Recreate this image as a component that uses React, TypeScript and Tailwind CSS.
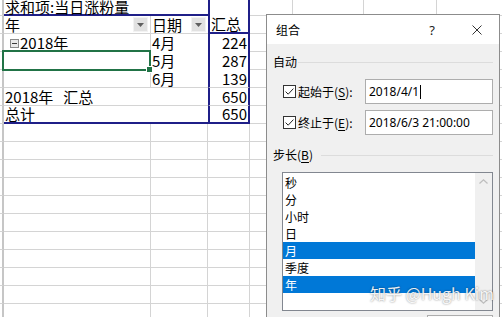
import React from "react";

function Tri() {
  return (
    <svg width="7" height="4" viewBox="0 0 7 4">
      <path d="M0 0H7L3.5 4Z" fill="#5f5f5f" />
    </svg>
  );
}

function DropBtn() {
  return (
    <div className="shrink-0 w-[15px] h-[15px] bg-[#e1e1e1] border border-[#f2f2f2] flex items-center justify-center">
      <Tri />
    </div>
  );
}

function Collapse() {
  return (
    <div className="shrink-0 w-[9px] h-[9px] bg-[#e9e9e9] border border-[#8a8a8a] flex items-center justify-center">
      <div className="w-[5px] h-px bg-[#3a3a3a]" />
    </div>
  );
}

function RH() {
  return <div className="shrink-0 w-[4px] h-full border-r-2 border-r-[#c6c6c6] border-b border-b-[#d4d4d4]" />;
}

function Tail() {
  return (
    <>
      <div className="shrink-0 w-[43px] h-full border-r border-b border-[#d4d4d4]" />
      <div className="shrink-0 w-[71px] h-full border-r border-b border-[#d4d4d4]" />
      <div className="shrink-0 w-[73px] h-full border-r border-b border-[#d4d4d4]" />
      <div className="shrink-0 w-[73px] h-full border-r border-b border-[#d4d4d4]" />
    </>
  );
}

function EmptyRow() {
  return (
    <div className="flex h-[18px]">
      <RH />
      <div className="shrink-0 w-[147px] h-full border-r border-b border-[#d4d4d4]" />
      <div className="shrink-0 w-[57px] h-full border-r border-b border-[#d4d4d4]" />
      <div className="shrink-0 w-[42px] h-full border-r border-b border-[#d4d4d4]" />
      <Tail />
    </div>
  );
}

function Check() {
  return (
    <svg width="13" height="13" viewBox="0 0 13 13" className="shrink-0">
      <rect x="0.5" y="0.5" width="12" height="12" fill="#ffffff" stroke="#333333" />
      <path d="M2.6 6.6 L5.2 9.2 L10.4 3.6" fill="none" stroke="#222222" strokeWidth="1" />
    </svg>
  );
}

function Sheet() {
  const blue = "border-[#1f1f88]";
  return (
    <div className="flex flex-col font-['Noto_Sans_CJK_SC',sans-serif] text-[15px] text-black">
      {/* row 1 */}
      <div className="flex h-[16px]">
        <RH />
        <div className="shrink-0 w-[147px] h-full border-b-2 border-b-[#1f1f88] pl-[1px] leading-[14px] whitespace-nowrap overflow-visible">
          求和项:当日涨粉量
        </div>
        <div className="shrink-0 w-[57px] h-full border-b-2 border-b-[#1f1f88]" />
        <div className={`shrink-0 w-[42px] h-full border-l-2 border-r-2 ${blue}`} />
        <Tail />
      </div>
      {/* row 2 header */}
      <div className="flex h-[18px]">
        <RH />
        <div className="shrink-0 w-[147px] h-full border-r border-b border-[#d4d4d4] pl-[1px] pr-[2px] flex items-center justify-between leading-[17px]">
          <span>年</span>
          <DropBtn />
        </div>
        <div className="shrink-0 w-[57px] h-full border-b border-[#d4d4d4] pl-[1px] pr-[2px] flex items-center justify-between leading-[17px]">
          <span>日期</span>
          <DropBtn />
        </div>
        <div className={`shrink-0 w-[42px] h-full border-l-2 border-r-2 border-b-2 ${blue} pl-[1px] leading-[16px]`}>
          汇总
        </div>
        <Tail />
      </div>
      {/* row 3 */}
      <div className="flex h-[18px]">
        <RH />
        <div className="shrink-0 w-[147px] h-full border-r border-[#d4d4d4] pl-[6px] flex items-center gap-[1px] leading-[18px]">
          <Collapse />
          <span>2018年</span>
        </div>
        <div className="shrink-0 w-[57px] h-full pl-[1px] leading-[18px]">4月</div>
        <div className={`shrink-0 w-[42px] h-full border-l-2 border-r-2 ${blue} pr-[1px] text-right leading-[18px]`}>224</div>
        <Tail />
      </div>
      {/* row 4 */}
      <div className="flex h-[18px]">
        <RH />
        <div className="relative shrink-0 w-[147px] h-full border-r border-[#d4d4d4]">
          <div className="absolute -left-[2px] -top-[2px] -right-[1px] -bottom-[1px] border-2 border-[#217346]">
            <div className="absolute -right-[4px] -bottom-[4px] w-[7px] h-[7px] bg-[#217346] border border-white" />
          </div>
        </div>
        <div className="shrink-0 w-[57px] h-full pl-[1px] leading-[18px]">5月</div>
        <div className={`shrink-0 w-[42px] h-full border-l-2 border-r-2 ${blue} pr-[1px] text-right leading-[18px]`}>287</div>
        <Tail />
      </div>
      {/* row 5 */}
      <div className="flex h-[18px]">
        <RH />
        <div className="shrink-0 w-[147px] h-full border-r border-b border-[#d4d4d4]" />
        <div className="shrink-0 w-[57px] h-full border-b border-[#d4d4d4] pl-[1px] leading-[17px]">6月</div>
        <div className="shrink-0 w-[42px] h-full border-l-2 border-r-2 border-l-[#1f1f88] border-r-[#1f1f88] border-b border-b-[#d4d4d4] pr-[1px] text-right leading-[17px]">139</div>
        <Tail />
      </div>
      {/* row 6 */}
      <div className="flex h-[18px]">
        <RH />
        <div className="shrink-0 w-[147px] h-full border-b border-[#d4d4d4] pl-[1px] leading-[17px] whitespace-nowrap">
          2018年<span className="ml-[10px]">汇总</span>
        </div>
        <div className="shrink-0 w-[57px] h-full border-b border-[#d4d4d4]" />
        <div className="shrink-0 w-[42px] h-full border-l-2 border-r-2 border-l-[#1f1f88] border-r-[#1f1f88] border-b border-b-[#d4d4d4] pr-[1px] text-right leading-[17px]">650</div>
        <Tail />
      </div>
      {/* row 7 */}
      <div className="flex h-[18px]">
        <RH />
        <div className="shrink-0 w-[147px] h-full border-b-2 border-b-[#1f1f88] pl-[1px] leading-[16px]">总计</div>
        <div className="shrink-0 w-[57px] h-full border-b-2 border-b-[#1f1f88]" />
        <div className={`shrink-0 w-[42px] h-full border-l-2 border-r-2 border-b-2 ${blue} pr-[1px] text-right leading-[16px]`}>650</div>
        <Tail />
      </div>
      {Array.from({ length: 11 }).map((_, i) => (
        <EmptyRow key={i} />
      ))}
    </div>
  );
}

function Dialog() {
  const items = ["秒", "分", "小时", "日", "月", "季度", "年"];
  const selected = new Set(["月", "年"]);
  return (
    <div className="absolute left-[266px] top-[14px] w-[234px] h-[330px] border border-[#8c8c8c] bg-[#f0f0f0] font-['Noto_Sans','Noto_Sans_CJK_SC',sans-serif] text-[12px] text-black flex flex-col">
      {/* title bar */}
      <div className="h-[29px] bg-white flex items-center pl-[9px] shrink-0">
        <span className="font-['Noto_Sans_CJK_SC',sans-serif] leading-[16px]">组合</span>
        <span className="ml-auto text-[13px] text-[#222] leading-[16px]">?</span>
        <svg width="10" height="10" viewBox="0 0 10 10" className="ml-[37px] mr-[17px]">
          <path d="M0.5 0.5 L9.5 9.5 M9.5 0.5 L0.5 9.5" stroke="#333333" strokeWidth="1" />
        </svg>
      </div>
      {/* body */}
      <div className="flex flex-col pt-[10px] font-['Noto_Sans_CJK_SC',sans-serif]">
        <div className="flex items-center h-[16px] pl-[6px] pr-[6px]">
          <span className="leading-[16px]">自动</span>
          <div className="flex-1 h-px bg-[#dcdcdc] ml-[1px]" />
        </div>
        <div className="flex items-center h-[25px] mt-[9px] pl-[16px] pr-[6px]">
          <Check />
          <span className="ml-[2px] leading-[16px]">
            起始于(<span className="underline underline-offset-2">S</span>):
          </span>
          <div className="ml-auto w-[128px] h-full bg-white border border-[#adadad] flex items-center pl-[3px] font-['Noto_Sans',sans-serif]">
            <span className="leading-[16px]">2018/4/1</span>
            <div className="w-px h-[14px] bg-black ml-[1px]" />
          </div>
        </div>
        <div className="flex items-center h-[25px] mt-[6px] pl-[16px] pr-[6px]">
          <Check />
          <span className="ml-[2px] leading-[16px]">
            终止于(<span className="underline underline-offset-2">E</span>):
          </span>
          <div className="ml-auto w-[128px] h-full bg-white border border-[#adadad] flex items-center pl-[3px] font-['Noto_Sans',sans-serif]">
            <span className="leading-[16px]">2018/6/3 21:00:00</span>
          </div>
        </div>
        <div className="flex items-center h-[16px] mt-[12px] pl-[6px] pr-[6px]">
          <span className="leading-[16px]">
            步长(<span className="underline underline-offset-2">B</span>)
          </span>
          <div className="flex-1 h-px bg-[#dcdcdc] ml-[8px]" />
        </div>
        <div className="flex mt-[9px] ml-[15px] w-[211px] h-[139px] bg-white border border-[#828790]">
          <div className="flex-1 flex flex-col pt-[1px]">
            {items.map((it) => (
              <div
                key={it}
                className={
                  selected.has(it)
                    ? "h-[17px] leading-[17px] pl-[2px] bg-[#0078d7] text-white"
                    : "h-[17px] leading-[17px] pl-[2px]"
                }
              >
                {it}
              </div>
            ))}
          </div>
          <div className="w-[17px] shrink-0 bg-[#f0f0f0] flex flex-col items-center justify-between py-[6px]">
            <svg width="9" height="5" viewBox="0 0 9 5">
              <path d="M0.5 4.5 L4.5 0.8 L8.5 4.5" fill="none" stroke="#bdbdbd" strokeWidth="1.2" />
            </svg>
            <svg width="9" height="5" viewBox="0 0 9 5">
              <path d="M0.5 0.5 L4.5 4.2 L8.5 0.5" fill="none" stroke="#bdbdbd" strokeWidth="1.2" />
            </svg>
          </div>
        </div>
        <div className="flex justify-end pr-[6px] mt-[4px]">
          <div className="w-[66px] h-[23px] bg-[#fbfbfb] border border-[#adadad]" />
        </div>
      </div>
    </div>
  );
}

export default function App() {
  return (
    <div className="relative w-[502px] h-[317px] overflow-hidden bg-white">
      <Sheet />
      <Dialog />
      <div className="absolute left-[370px] top-[283px] text-[16px] leading-[20px] whitespace-nowrap font-['Noto_Sans_CJK_SC',sans-serif] text-white/90 [text-shadow:0_0_2px_rgba(0,0,0,0.55)]">
        知乎 @Hugh Kim
      </div>
    </div>
  );
}
